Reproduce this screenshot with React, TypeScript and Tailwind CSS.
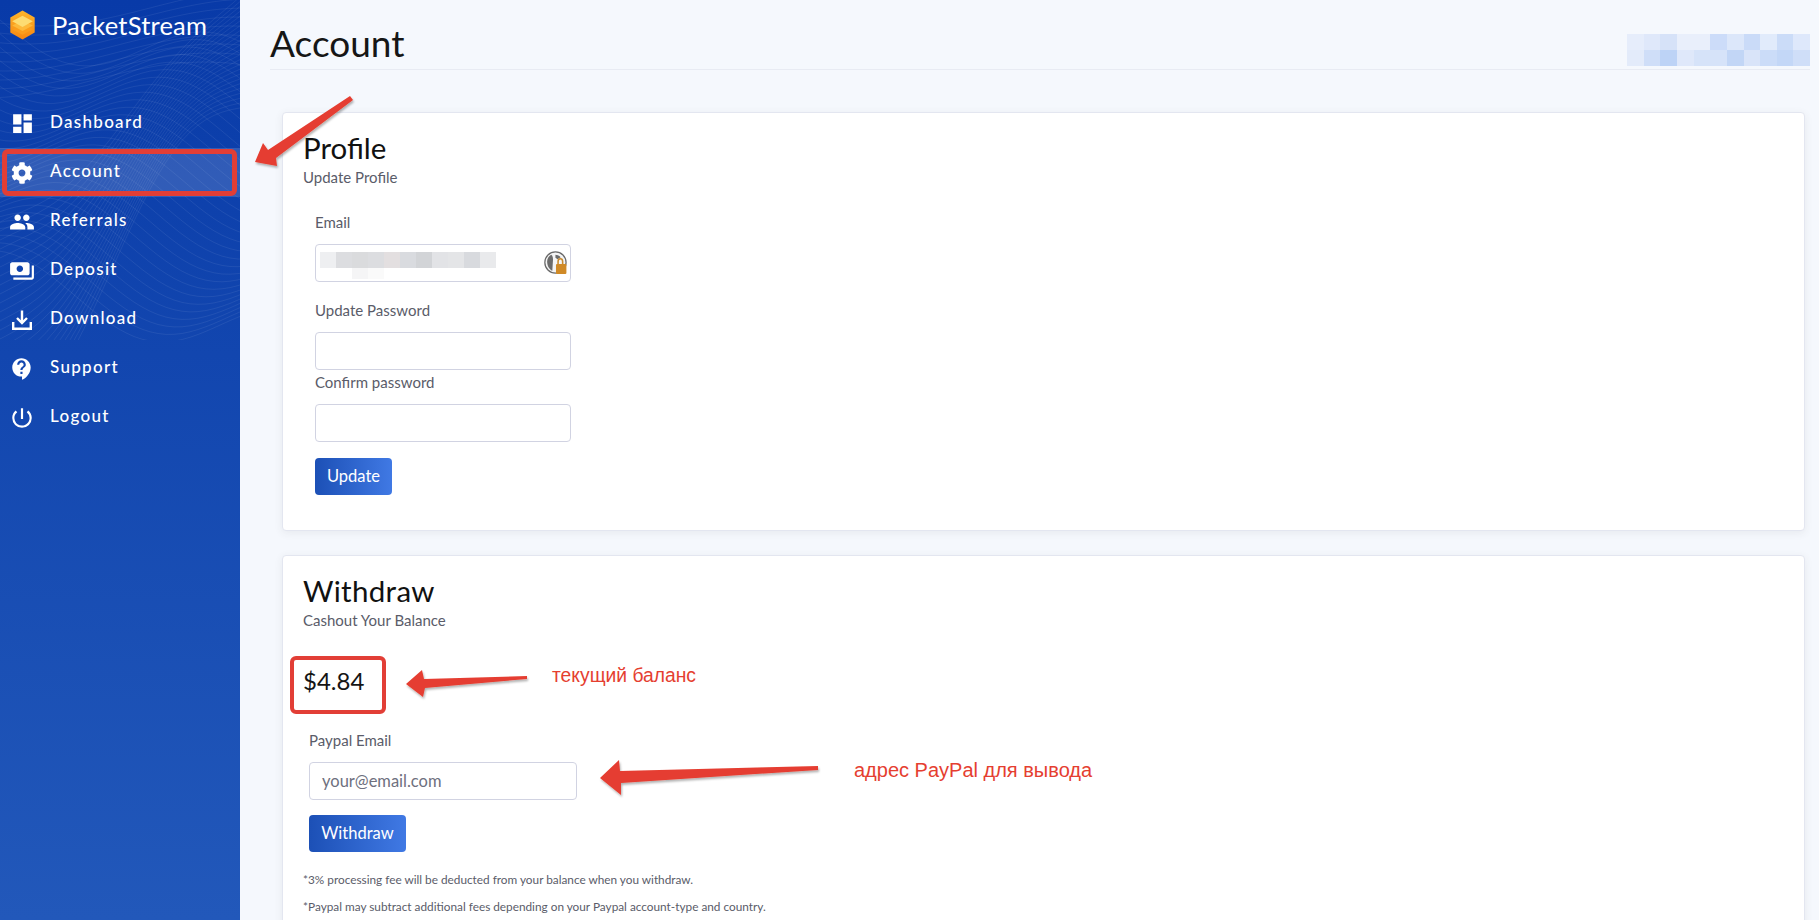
import React from 'react';
import { FaCog } from 'react-icons/fa';
import { MdContactSupport, MdDashboard, MdPayments, MdPeople, MdPowerSettingsNew } from 'react-icons/md';

const navItems = [
  { label: 'Dashboard', icon: <MdDashboard size={25} /> },
  { label: 'Account', icon: <FaCog size={22} />, active: true },
  { label: 'Referrals', icon: <MdPeople size={26} /> },
  { label: 'Deposit', icon: <MdPayments size={26} /> },
  { label: 'Download', icon: <DownloadIcon /> },
  { label: 'Support', icon: <MdContactSupport size={26} /> },
  { label: 'Logout', icon: <MdPowerSettingsNew size={26} /> },
];

const emailBlur = [
  'bg-[#eeeff1]', 'bg-[#dcdde0]', 'bg-[#dadbdd]', 'bg-[#dcdde0]', 'bg-[#e3dfe0]', 'bg-[#d9dbdf]',
  'bg-[#d2d4d7]', 'bg-[#e2e3e6]', 'bg-[#e4e5e7]', 'bg-[#d8dade]', 'bg-[#e9eaec]',
];

const headerBlurTop = [
  'bg-[#e6edfb]', 'bg-[#dfe8fa]', 'bg-[#d6e2f8]', 'bg-[#e9effb]', 'bg-[#e9effb]', 'bg-[#ccdcf9]',
  'bg-[#dce7fa]', 'bg-[#cadbf8]', 'bg-[#e1ebfb]', 'bg-[#cbdcf8]', 'bg-[#dee8fb]',
];

const headerBlurBottom = [
  'bg-[#e3ebfa]', 'bg-[#cfdef8]', 'bg-[#bdd3f6]', 'bg-[#dfe8fa]', 'bg-[#d6e3f9]', 'bg-[#d6e3f9]',
  'bg-[#c2d6f6]', 'bg-[#d9e4f9]', 'bg-[#cbdcf8]', 'bg-[#c3d7f7]', 'bg-[#cfdef8]',
];

function DownloadIcon() {
  return (
    <svg width="22" height="22" viewBox="0 0 22 22" fill="none" stroke="currentColor" strokeWidth="2.4">
      <path d="M11 1.5v12M6 9l5 5 5-5" />
      <path d="M2.2 13v6.8h17.6V13" />
    </svg>
  );
}

function Logo() {
  return (
    <svg width="27" height="30" viewBox="0 0 28 32">
      <defs>
        <linearGradient id="hex" x1="0" y1="0" x2="0" y2="1">
          <stop offset="0" stopColor="#fdb52c" />
          <stop offset="1" stopColor="#f7860f" />
        </linearGradient>
      </defs>
      <path d="M14 0.5 27 8v16L14 31.5 1 24V8z" fill="url(#hex)" />
      <path d="M14 15 25 20.5 14 26.5 3 20.5z" fill="#fb9d1c" />
      <path d="M14 11 25 16.5 14 22.5 3 16.5z" fill="#fdb93a" />
      <path d="M14 6 25 12 14 18 3 12z" fill="#fddc72" />
    </svg>
  );
}

const curve = (fn: (x: number) => number) => {
  let d = '';
  for (let x = -10; x <= 250; x += 8) {
    d += `${d ? 'L' : 'M'}${x} ${fn(x).toFixed(1)}`;
  }
  return d;
};

// wave mesh behind the top of the sidebar
function SidebarWaves() {
  const rising = Array.from({ length: 24 }, (_, i) =>
    curve((x) => 330 - 1.15 * x + (i - 12) * 9 * (0.72 + 0.28 * Math.cos(x / 60)) + 24 * Math.sin(x / 38)),
  );
  const falling = Array.from({ length: 30 }, (_, i) =>
    curve((x) => 20 + i * 9 + 30 * Math.sin(x / 46 + i * 0.16) + x * 0.2),
  );
  const top = Array.from({ length: 9 }, (_, i) =>
    curve((x) => 8 + i * 9 + 18 * Math.sin(x / 70 + 1 + i * 0.1)),
  );
  return (
    <svg className="absolute left-0 top-0 pointer-events-none" width="240" height="340" viewBox="0 0 240 340" fill="none" stroke="#ffffff" strokeWidth="0.7" strokeOpacity="0.1">
      {rising.map((d) => <path key={d} d={d} />)}
      {falling.map((d) => <path key={d} d={d} />)}
      {top.map((d) => <path key={d} d={d} />)}
    </svg>
  );
}

function LockBadge() {
  return (
    <svg width="25" height="25" viewBox="0 0 24 24">
      <circle cx="11" cy="11" r="10.2" fill="#f4f4f4" stroke="#6a6a6a" strokeWidth="1.2" />
      <path d="M3 10c0-3 2-5.5 4-6.5 1.5 1 2 3.500 1.500 7L8 19c-3-1.500-5-5-5-9z" fill="#6b6b6b" />
      <path d="M11 3.500c2 .2 4 1 5 2.500l-3 2-2-1.500z" fill="#6b6b6b" />
      <path d="M13.500 12.500v-2.500c0-1.500.8-2.600 2.200-2.600s2.200 1.100 2.200 2.600v2.500" fill="none" stroke="#c98a2c" strokeWidth="1.500" />
      <rect x="11.500" y="12.500" width="10" height="9.500" rx="1" fill="#d08a26" />
    </svg>
  );
}

function Field({ label, className, inputClass, children, placeholder }: { label: string; className?: string; inputClass?: string; children?: React.ReactNode; placeholder?: string }) {
  return (
    <div className={className}>
      <div className="text-[15px] leading-[20px] text-[#5a5c69]">{label}</div>
      <div className={`relative mt-[12px] h-[38px] rounded-[4px] border border-[#d1d3e2] bg-white ${inputClass ?? 'w-[256px]'}`}>
        {placeholder && <div className="pl-[12px] text-[16.500px] leading-[36px] text-[#6e707e]">{placeholder}</div>}
        {children}
      </div>
    </div>
  );
}

function BlueButton({ label, className }: { label: string; className: string }) {
  return (
    <button className={`h-[37px] rounded-[4px] bg-gradient-to-r from-[#1c50b6] to-[#4079e4] text-[16.500px] text-white ${className}`}>
      {label}
    </button>
  );
}

function Annotations() {
  return (
    <svg className="absolute left-0 top-0 pointer-events-none" width="1819" height="920" viewBox="0 0 1819 920">
      <defs>
        <filter id="arrowShadow" x="-10%" y="-30%" width="120%" height="170%">
          <feDropShadow dx="1" dy="2" stdDeviation="1" floodColor="#000000" floodOpacity="0.3" />
        </filter>
      </defs>
      <g fill="#e53e30" filter="url(#arrowShadow)">
        <path d="M255 162 263 143 268 150 350 96 353 100 276 158 277 166z" />
        <path d="M406 684 422 670 424 679 527 676 527 679 425 688 423 697z" />
        <path d="M600 778 619 760 620 771 818 766 818 770 621 783 621 795z" />
      </g>
    </svg>
  );
}

export default function App() {
  return (
    <div className="relative flex h-screen w-full overflow-hidden bg-[#f5f8fd] text-[#111111] [font-family:Lato,sans-serif]">
      <aside className="relative w-[240px] shrink-0 bg-gradient-to-b from-[#083aa8] to-[#2258ba] text-white">
        <SidebarWaves />
        <div className="relative flex h-[50px] items-center pl-[9px]">
          <Logo />
          <span className="ml-[16px] text-[25.500px] tracking-[0.2px]">PacketStream</span>
        </div>
        <nav className="relative mt-[49px]">
          {navItems.map((item) => (
            <div key={item.label} className={`flex h-[49px] items-center ${item.active ? 'bg-white/15' : ''}`}>
              <div className="flex w-[50px] shrink-0 justify-center pr-[6px]">{item.icon}</div>
              <span className="pb-[4px] text-[17px] font-medium tracking-[1.300px]">{item.label}</span>
            </div>
          ))}
        </nav>
        <div className="absolute left-[2px] top-[149px] h-[47px] w-[235px] rounded-[6px] border-[5px] border-[#e23e36]" />
      </aside>

      <main className="min-w-0 flex-1 pl-[30px] pr-[9px]">
        <header className="flex h-[70px] items-start justify-between border-b border-[#e8ebf3]">
          <h1 className="pt-[18px] text-[37px] leading-[50px] text-[#161616]">Account</h1>
          <div className="pt-[34px]">
            <div className="flex">
              {headerBlurTop.map((c, i) => <div key={i} className={`h-[16px] w-[16.640px] ${c}`} />)}
            </div>
            <div className="flex">
              {headerBlurBottom.map((c, i) => <div key={i} className={`h-[16px] w-[16.640px] ${c}`} />)}
            </div>
          </div>
        </header>

        <section className="ml-[12px] mr-[5px] mt-[42px] h-[419px] rounded-[4px] border border-[#e3e6f0] bg-white pl-[20px] pt-[17px] shadow-[0_2px_8px_rgba(58,59,69,0.08)]">
          <h2 className="text-[29.500px] leading-[36px]">Profile</h2>
          <p className="mt-[1px] text-[15px] leading-[20px] text-[#5a5c69]">Update Profile</p>
          <Field label="Email" className="ml-[12px] mt-[25px]">
            <div className="absolute left-[4px] top-[7px]">
              <div className="flex">
                {emailBlur.map((c, i) => <div key={i} className={`h-[16px] w-[16px] ${c}`} />)}
              </div>
              <div className="ml-[32px] flex">
                <div className="h-[11px] w-[16px] bg-[#f5f5f6]" />
                <div className="h-[11px] w-[16px] bg-[#fafafa]" />
              </div>
            </div>
            <div className="absolute right-[1px] top-[6px]"><LockBadge /></div>
          </Field>
          <Field label="Update Password" className="ml-[12px] mt-[18px]" />
          <Field label="Confirm password" className="ml-[12px] mt-[2px]" />
          <BlueButton label="Update" className="ml-[12px] mt-[16px] w-[77px]" />
        </section>

        <section className="relative ml-[12px] mr-[5px] mt-[24px] h-[400px] rounded-[4px] border border-[#e3e6f0] bg-white pl-[20px] pt-[17px] shadow-[0_2px_8px_rgba(58,59,69,0.08)]">
          <h2 className="text-[29.500px] leading-[36px] tracking-[0.3px]">Withdraw</h2>
          <p className="mt-[1px] text-[15px] leading-[20px] text-[#5a5c69]">Cashout Your Balance</p>
          <div className="mt-[36px] text-[24px] leading-[30px] text-[#151515]">$4.84</div>
          <div className="absolute left-[7px] top-[100px] h-[58px] w-[96px] rounded-[6px] border-[4px] border-[#e23e36]" />
          <Field label="Paypal Email" className="ml-[6px] mt-[34px]" inputClass="w-[268px]" placeholder="your@email.com" />
          <BlueButton label="Withdraw" className="ml-[6px] mt-[15px] w-[97px]" />
          <p className="mt-[20px] text-[11.800px] leading-[16px] text-[#5a5c69]">*3% processing fee will be deducted from your balance when you withdraw.</p>
          <p className="mt-[11px] text-[11.800px] leading-[16px] text-[#5a5c69]">*Paypal may subtract additional fees depending on your Paypal account-type and country.</p>
          <div className="absolute left-[269px] top-[108px] text-[19.300px] leading-[24px] text-[#e53e30] [font-family:'Liberation_Sans',sans-serif]">текущий баланс</div>
          <div className="absolute left-[571px] top-[202px] text-[20px] leading-[24px] text-[#e53e30] [font-family:'Liberation_Sans',sans-serif]">адрес PayPal для вывода</div>
        </section>
      </main>

      <Annotations />
    </div>
  );
}
